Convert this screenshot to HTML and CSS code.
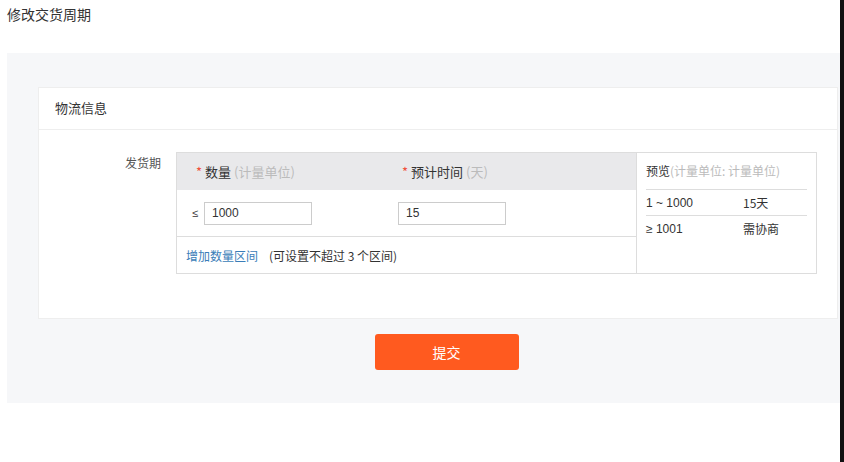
FILE: index.html
```html
<!DOCTYPE html>
<html>
<head>
  <title>修改交货周期</title>
  <meta charset="utf-8">
  <link rel="stylesheet" href="styles.css">
</head>
<body>
  <div class="page">
    <div class="page-title">修改交货周期</div>
    <div class="panel">
      <div class="card">
        <div class="card-header">物流信息</div>
        <div class="card-body">
          <div class="field-label">发货期</div>
          <div class="period-box">
            <div class="period-form">
              <div class="row row-head">
                <div class="cell"><span class="req">*</span>数量 <span class="hint">(计量单位)</span></div>
                <div class="cell"><span class="req">*</span>预计时间 <span class="hint">(天)</span></div>
              </div>
              <div class="row row-input">
                <div class="cell"><span class="op">≤</span><input class="text-input" type="text" value="1000"></div>
                <div class="cell"><input class="text-input" type="text" value="15"></div>
              </div>
              <div class="row row-add">
                <a class="add-link" href="#">增加数量区间</a>
                <span class="add-tip">(可设置不超过 3 个区间)</span>
              </div>
            </div>
            <div class="preview">
              <div class="preview-title">预览<span class="hint">(计量单位: 计量单位)</span></div>
              <div class="preview-row">
                <span class="range">1 ~ 1000</span>
                <span>15天</span>
              </div>
              <div class="preview-row">
                <span class="range">≥ 1001</span>
                <span>需协商</span>
              </div>
            </div>
          </div>
        </div>
      </div>
      <div class="actions">
        <button class="submit-btn">提交</button>
      </div>
    </div>
  </div>
  <div class="edge"></div>
</body>
</html>
```

FILE: styles.css
```css
body {
  margin: 0;
  font-family: "Noto Sans CJK SC", "Noto Sans", sans-serif;
  font-size: 12px;
  color: #333333;
  background: #ffffff;
  display: flex;
  height: 462px;
  overflow: hidden;
}

.page {
  width: 840px;
}

.edge {
  width: 4px;
  background: #111111;
}

.page-title {
  font-size: 14px;
  line-height: 20px;
  padding: 4px 7px 29px;
}

.panel {
  margin-left: 7px;
  background: #f6f7f9;
  padding: 34px 2px 33px 31px;
}

.card {
  background: #ffffff;
  border: 1px solid #eeeeee;
}

.card-header {
  font-size: 13px;
  height: 41px;
  line-height: 40px;
  padding-left: 16px;
  border-bottom: 1px solid #eeeeee;
}

.card-body {
  display: flex;
  padding: 22px 0 44px;
}

.field-label {
  width: 122px;
  text-align: right;
  padding-top: 2px;
  line-height: 18px;
  margin-right: 15px;
  color: #555555;
}

.period-box {
  display: flex;
  border: 1px solid #dddddd;
  height: 120px;
}

.period-form {
  width: 459px;
}

.row {
  display: flex;
  align-items: center;
}

.row-head {
  height: 37px;
  background: #e9e9eb;
  font-size: 13px;
}

.row-head .cell {
  padding-left: 19px;
}

.row-input {
  height: 46px;
  border-bottom: 1px solid #dddddd;
}

.row-input .cell {
  padding-left: 15px;
  display: flex;
  align-items: center;
}

.cell {
  width: 206px;
  box-sizing: border-box;
}

.req {
  color: #f0503c;
  margin-right: 3px;
}

.hint {
  color: #bbbbbb;
}

.op {
  width: 12px;
  font-family: "Liberation Sans", sans-serif;
  font-size: 11px;
}

.text-input {
  width: 108px;
  height: 23px;
  box-sizing: border-box;
  border: 1px solid #cccccc;
  padding: 0 7px;
  font-family: "Liberation Sans", sans-serif;
  font-size: 12px;
  color: #333333;
  outline: none;
}

.row-add {
  height: 36px;
  padding-left: 9px;
}

.add-link {
  color: #3a7db8;
  text-decoration: none;
  margin-right: 11px;
}

.preview {
  width: 180px;
  border-left: 1px solid #dddddd;
  padding: 0 9px;
  box-sizing: border-box;
}

.preview-title {
  height: 36px;
  line-height: 36px;
  border-bottom: 1px solid #dddddd;
}

.preview-row {
  display: flex;
  height: 25px;
  align-items: center;
  border-bottom: 1px solid #dddddd;
}

.preview-row:last-child {
  border-bottom: none;
}

.range {
  width: 97px;
  font-family: "Liberation Sans", sans-serif;
}

.actions {
  display: flex;
  justify-content: center;
  padding-top: 15px;
  padding-left: 17px;
}

.submit-btn {
  width: 144px;
  height: 36px;
  border: none;
  border-radius: 3px;
  background: #ff5a1f;
  color: #ffffff;
  font-family: inherit;
  font-size: 14px;
  cursor: pointer;
}
```
